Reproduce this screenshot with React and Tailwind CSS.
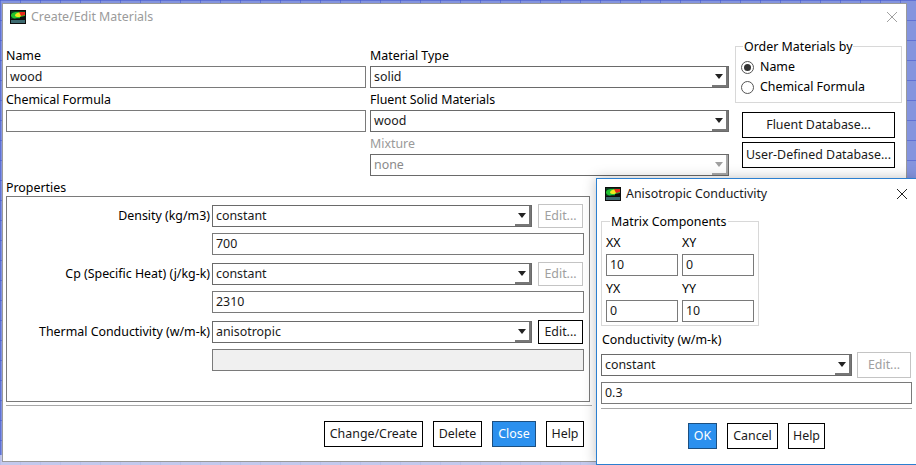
import React from 'react';

const fontClass = "font-['Noto_Sans','Open_Sans',sans-serif] text-[12.4px]";

function FluentIcon({ className }) {
  return (
    <svg className={className} width="16" height="14" viewBox="0 0 16 14">
      <rect width="16" height="14" fill="#0d0d0d" />
      <rect x="1" y="1" width="14" height="8" fill="#0a3a1e" />
      <path d="M1 5 C2 2 5 2 8 2 C11 2 14 2 15 4 L15 6 C13 8 10 8 7 8 C4 9 2 8 1 6 Z" fill="#22c030" />
      <path d="M5 5 C6 3 9 2 11 3 C12 5 11 7 9 7 C7 7 5 7 5 5 Z" fill="#f2e81e" />
      <path d="M9 2 L15 2 L15 5 L11 6 Z" fill="#e8281a" />
      <path d="M10 7 L15 6 L15 9 L10 9 Z" fill="#0d0d0d" />
      <rect x="1" y="10" width="14" height="3" fill="#3d6a70" />
    </svg>
  );
}

function Field({ value, className = '', muted = false, off = false, h = 'h-[22px]' }) {
  return (
    <div className={`${h} border border-[#7a7a7a] pl-[3px] leading-[20px] truncate ${off ? 'bg-[#f0f0f0]' : 'bg-white'} ${muted ? 'text-[#8a8a8a]' : 'text-[#1a1a1a]'} ${className}`}>
      {value}
    </div>
  );
}

function Dropdown({ value, className = '', muted = false }) {
  return (
    <div className={`h-[22px] flex border border-[#6a6a6a] bg-white ${className}`}>
      <div className={`flex-1 pl-[3px] leading-[20px] ${muted ? 'text-[#8a8a8a]' : 'text-[#1a1a1a]'}`}>{value}</div>
      <div className={`w-[16px] h-full flex items-center justify-center border-r-2 border-b-2 ${muted ? 'border-[#a8a8a8]' : 'border-[#777]'}`}>
        <svg width="8" height="5" viewBox="0 0 8 5"><path d="M0 0 H8 L4 5 Z" fill={muted ? '#a0a0a0' : '#222'} /></svg>
      </div>
    </div>
  );
}

function Btn({ children, className = '', disabled = false, primary = false }) {
  const look = primary
    ? 'bg-[#2b90ee] border-[#1c4f80] text-white'
    : disabled
      ? 'bg-white border-[#c4c4c4] text-[#a0a0a0]'
      : 'bg-white border-black text-[#1a1a1a]';
  return <div className={`flex items-center justify-center border whitespace-nowrap ${look} ${className}`}>{children}</div>;
}

function Radio({ on, label }) {
  return (
    <div className="h-[20px] flex items-center gap-[6px]">
      <div className="w-[13px] h-[13px] rounded-full border border-[#555] flex items-center justify-center">
        {on && <div className="w-[7px] h-[7px] rounded-full bg-[#333]" />}
      </div>
      <span>{label}</span>
    </div>
  );
}

function PropertyRow({ label, method, value, active = false, off = false }) {
  return (
    <div className="mb-[8px]">
      <div className="flex items-center h-[22px]">
        <div className="w-[205px] text-right pr-[2px] shrink-0 whitespace-nowrap">{label}</div>
        <Dropdown value={method} className="w-[320px]" />
        <Btn disabled={!active} className="ml-[6px] w-[45px] h-[24px]">Edit...</Btn>
      </div>
      <Field value={value} off={off} className="ml-[205px] mt-[6px] w-[372px]" />
    </div>
  );
}

function MainWindow() {
  return (
    <div className="absolute left-[2px] top-[3px] w-[905px] h-[459px] bg-white border border-[#9a9a9a] flex flex-col">
      <div className="h-[26px] pl-[7px] flex items-center gap-[5px] text-[#9b9b9b] shrink-0">
        <FluentIcon />
        <span>Create/Edit Materials</span>
        <svg className="ml-auto mr-[8px]" width="12" height="12" viewBox="0 0 12 12"><path d="M1 1 L11 11 M11 1 L1 11" stroke="#a0a0a0" strokeWidth="1" /></svg>
      </div>
      <div className="flex pl-[3px] mt-[16px] shrink-0">
        <div className="w-[360px]">
          <div className="h-[20px] leading-[20px]">Name</div>
          <Field value="wood" />
          <div className="h-[22px] leading-[24px]">Chemical Formula</div>
          <Field value="" />
        </div>
        <div className="w-[359px] ml-[4px]">
          <div className="h-[20px] leading-[20px]">Material Type</div>
          <Dropdown value="solid" />
          <div className="h-[22px] leading-[24px]">Fluent Solid Materials</div>
          <Dropdown value="wood" />
          <div className="h-[22px] leading-[24px] text-[#9a9a9a]">Mixture</div>
          <Dropdown value="none" muted />
        </div>
        <div className="w-[167px] ml-[6px]">
          <div className="relative h-[57px] border border-[#d8d8d8] pt-[10px] pl-[5px]">
            <span className="absolute left-[7px] -top-[10px] bg-white px-[1px] leading-[20px]">Order Materials by</span>
            <Radio on label="Name" />
            <Radio label="Chemical Formula" />
          </div>
          <Btn className="ml-[7px] mt-[9px] w-[153px] h-[26px]">Fluent Database...</Btn>
          <Btn className="ml-[7px] mt-[4px] w-[153px] h-[26px]">User-Defined Database...</Btn>
        </div>
      </div>
      <div className="pl-[3px] mt-[2px] h-[18px] leading-[20px] shrink-0">Properties</div>
      <div className="ml-[3px] w-[584px] h-[206px] border border-[#7a7a7a] pt-[8px] shrink-0">
        <PropertyRow label="Density (kg/m3)" method="constant" value="700" />
        <PropertyRow label="Cp (Specific Heat) (j/kg-k)" method="constant" value="2310" />
        <PropertyRow label="Thermal Conductivity (w/m-k)" method="anisotropic" value="" active off />
      </div>
      <div className="ml-[3px] w-[586px] mt-[3px] border-t border-[#a8a8a8] shrink-0" />
      <div className="flex pl-[321px] mt-[15px] gap-[10px]">
        <Btn className="w-[99px] h-[26px]">Change/Create</Btn>
        <Btn className="w-[49px] h-[26px]">Delete</Btn>
        <Btn primary className="w-[44px] h-[26px]">Close</Btn>
        <Btn className="w-[38px] h-[26px]">Help</Btn>
      </div>
    </div>
  );
}

function MatrixCell({ label, value }) {
  return (
    <div>
      <div className="h-[21px] leading-[20px]">{label}</div>
      <Field value={value} className="w-[72px]" />
    </div>
  );
}

function ConductivityDialog() {
  return (
    <div className="absolute left-[596px] top-[178px] w-[321px] h-[287px] bg-white border border-[#2b7fd0] shadow-[0_0_12px_rgba(0,0,0,0.25)] flex flex-col">
      <div className="h-[29px] pl-[8px] pt-[1px] flex items-center gap-[5px] text-[#1a1a1a] shrink-0">
        <FluentIcon />
        <span>Anisotropic Conductivity</span>
        <svg className="ml-auto mr-[8px]" width="12" height="12" viewBox="0 0 12 12"><path d="M1 1 L11 11 M11 1 L1 11" stroke="#222" strokeWidth="1" /></svg>
      </div>
      <div className="relative ml-[4px] mt-[13px] w-[158px] h-[105px] border border-[#d8d8d8] px-[4px] pt-[11px] shrink-0">
        <span className="absolute left-[8px] -top-[10px] bg-white px-[1px] leading-[20px]">Matrix Components</span>
        <div className="grid grid-cols-[72px_72px] gap-x-[4px] gap-y-[3px]">
          <MatrixCell label="XX" value="10" />
          <MatrixCell label="XY" value="0" />
          <MatrixCell label="YX" value="0" />
          <MatrixCell label="YY" value="10" />
        </div>
      </div>
      <div className="pl-[5px] mt-[4px] h-[20px] leading-[20px] shrink-0">Conductivity (w/m-k)</div>
      <div className="flex items-center ml-[4px] mt-[2px] shrink-0">
        <Dropdown value="constant" className="w-[251px]" />
        <Btn disabled className="ml-[5px] w-[54px] h-[26px]">Edit...</Btn>
      </div>
      <Field value="0.3" className="ml-[4px] mt-[4px] w-[311px] shrink-0" />
      <div className="ml-[4px] w-[311px] mt-[4px] border-t border-[#a8a8a8] shrink-0" />
      <div className="flex pl-[91px] mt-[14px] gap-[10px]">
        <Btn primary className="w-[29px] h-[26px]">OK</Btn>
        <Btn className="w-[51px] h-[26px]">Cancel</Btn>
        <Btn className="w-[37px] h-[26px]">Help</Btn>
      </div>
    </div>
  );
}

export default function App() {
  return (
    <div className={`relative w-[916px] h-[465px] overflow-hidden bg-[#8494de] ${fontClass}`}>
      <svg className="absolute inset-0" width="916" height="465">
        <defs>
          <pattern id="mesh" width="20" height="20" patternUnits="userSpaceOnUse">
            <path d="M0 0 H20 M0 0 V20" stroke="#3c50cc" strokeWidth="1" fill="none" />
          </pattern>
        </defs>
        <rect width="916" height="465" fill="url(#mesh)" />
        <rect y="455" width="600" height="10" fill="#d8dbf2" fillOpacity="0.75" />
      </svg>
      <MainWindow />
      <ConductivityDialog />
    </div>
  );
}
